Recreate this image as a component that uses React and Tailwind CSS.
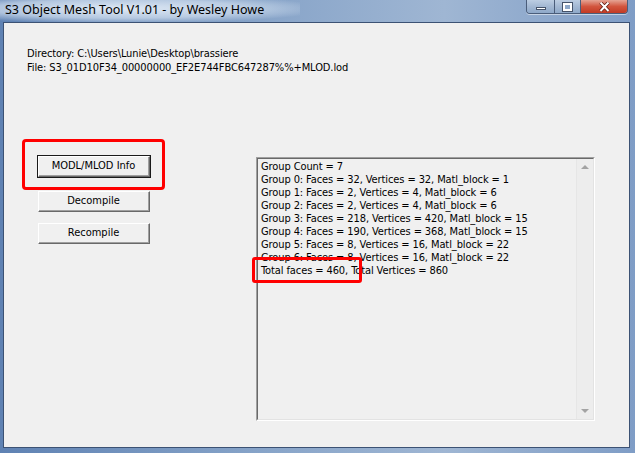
import React from 'react'

const lines = [
  'Group Count = 7',
  'Group 0: Faces = 32, Vertices = 32, Matl_block = 1',
  'Group 1: Faces = 2, Vertices = 4, Matl_block = 6',
  'Group 2: Faces = 2, Vertices = 4, Matl_block = 6',
  'Group 3: Faces = 218, Vertices = 420, Matl_block = 15',
  'Group 4: Faces = 190, Vertices = 368, Matl_block = 15',
  'Group 5: Faces = 8, Vertices = 16, Matl_block = 22',
  'Group 6: Faces = 8, Vertices = 16, Matl_block = 22',
  'Total faces = 460, Total Vertices = 860',
]

export default function App() {
  return (
    <div className="w-[635px] h-[453px] flex flex-col overflow-hidden bg-[linear-gradient(90deg,#5f82b3_0%,#86a3c8_40%,#9fb6d3_70%,#7f9dc6_100%)] font-['Liberation_Sans',sans-serif]">
      {/* Title bar */}
      <div className="relative h-[22px] shrink-0 flex items-start">
        <div className="absolute left-0 top-0 w-[300px] h-[22px] bg-[radial-gradient(ellipse_at_40%_40%,rgba(230,238,248,0.95)_0%,rgba(210,224,240,0.7)_50%,rgba(180,200,225,0)_80%)]" />
        <span className="relative pl-[5px] pt-[2px] text-[12.5px] text-black font-['Noto_Sans',sans-serif] leading-[16px]">
          S3 Object Mesh Tool V1.01 - by Wesley Howe
        </span>
        <WindowButtons />
      </div>

      {/* Client area */}
      <div className="relative flex-1 ml-[3px] mr-[5px] mb-[5px] border border-[#3c5274] bg-[#f0f0f0] text-[11px] text-black">
        <div className="pt-[24px] pl-[23px] leading-[14px] font-['DejaVu_Sans_Condensed','DejaVu_Sans',sans-serif] tracking-[-0.1px]">
          <p>Directory: C:\Users\Lunie\Desktop\brassiere</p>
          <p>File: S3_01D10F34_00000000_EF2E744FBC647287%%+MLOD.lod</p>
        </div>

        <div className="flex mt-[80px] pl-[33px]">
          <div className="flex flex-col w-[114px]">
            <WinButton label="MODL/MLOD Info" def />
            <div className="h-[12px]" />
            <WinButton label="Decompile" />
            <div className="h-[9px]" />
            <WinButton label="Recompile" />
          </div>

          <div className="ml-[105px] mt-[2px] w-[339px] h-[264px] flex border-t border-l border-[#a0a0a0] border-r border-r-white border-b border-b-white">
            <div className="flex-1 flex border-t border-l border-[#696969] border-r border-r-[#e3e3e3] border-b border-b-[#e3e3e3]">
              <div className="flex-1 pl-[3px] pt-[1px] leading-[13px] font-['DejaVu_Sans_Condensed','DejaVu_Sans',sans-serif] tracking-[-0.1px]">
                {lines.map((l) => (
                  <p key={l} className="whitespace-nowrap">{l}</p>
                ))}
              </div>
              <div className="w-[17px] flex flex-col justify-between items-center bg-[#ededed] border-l border-[#e6e6e6]">
                <span className="mt-[6px] w-0 h-0 border-l-[4px] border-r-[4px] border-b-[4px] border-l-transparent border-r-transparent border-b-[#a3a3a3]" />
                <span className="mb-[6px] w-0 h-0 border-l-[4px] border-r-[4px] border-t-[4px] border-l-transparent border-r-transparent border-t-[#a3a3a3]" />
              </div>
            </div>
          </div>
        </div>

        {/* Red annotation boxes */}
        <div className="absolute left-[18px] top-[116px] w-[143px] h-[51px] border-[3px] border-[#ff0000] rounded-[4px]" />
        <div className="absolute left-[248px] top-[234px] w-[110px] h-[26px] border-[3px] border-[#ff0000] rounded-[3px]" />
      </div>
    </div>
  )
}

function WinButton({ label, def }) {
  return (
    <div className={`h-[23px] flex ${def ? 'border border-[#1a1a1a]' : 'border border-transparent'}`}>
      <div className="flex-1 flex border-t border-l border-white border-r border-r-[#696969] border-b border-b-[#696969]">
        <div className="flex-1 flex items-center justify-center border-r border-b border-[#a0a0a0] bg-[#f0f0f0] font-['DejaVu_Sans_Condensed','DejaVu_Sans',sans-serif] text-[11px]">
          {label}
        </div>
      </div>
    </div>
  )
}

function WindowButtons() {
  return (
    <div className="absolute right-[7px] top-0 flex h-[14px] rounded-b-[4px] border border-t-0 border-[#4a5d7a] overflow-hidden shadow-[0_1px_0_rgba(255,255,255,0.5)]">
      <div className="w-[28px] flex items-center justify-center border-r border-[#4a5d7a] bg-[linear-gradient(180deg,#bccde2_0%,#a3b8d3_50%,#8ea8c9_100%)]">
        <span className="mt-[4px] w-[10px] h-[3px] bg-white border border-[#45536a]" />
      </div>
      <div className="w-[26px] flex items-center justify-center border-r border-[#4a5d7a] bg-[linear-gradient(180deg,#bccde2_0%,#a3b8d3_50%,#8ea8c9_100%)]">
        <span className="w-[9px] h-[8px] border-[2px] border-white outline outline-1 outline-[#45536a] bg-[#8ea8c9]" />
      </div>
      <div className="w-[46px] flex items-center justify-center bg-[linear-gradient(180deg,#e5a494_0%,#d2553e_50%,#c23a24_100%)]">
        <svg width="11" height="10" viewBox="0 0 11 10">
          <path d="M1.5 0.5 L9.5 9 M9.5 0.5 L1.5 9" stroke="#5a1a10" strokeWidth="3.4" />
          <path d="M1.5 0.5 L9.5 9 M9.5 0.5 L1.5 9" stroke="#ffffff" strokeWidth="2" />
        </svg>
      </div>
    </div>
  )
}
